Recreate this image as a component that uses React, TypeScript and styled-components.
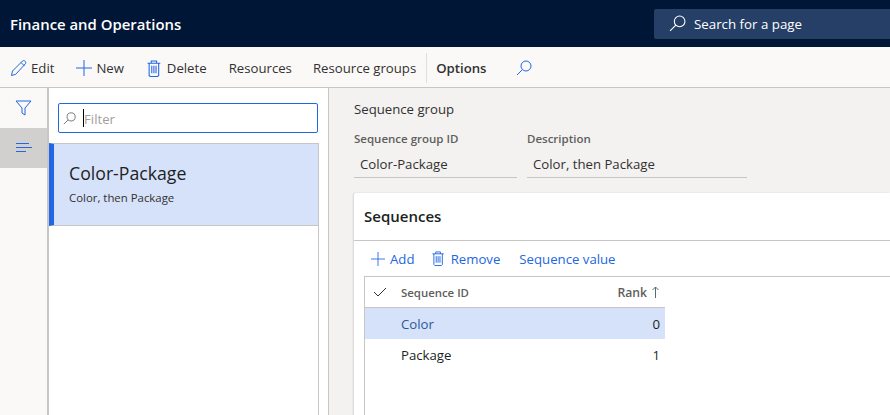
import React, { FC } from 'react';
import styled, { createGlobalStyle } from 'styled-components';

const Global = createGlobalStyle`
  html, body {
    margin: 0;
    height: 100%;
    overflow: hidden;
  }

  body {
    font-family: 'Open Sans', 'Noto Sans', 'Liberation Sans', sans-serif;
    font-size: 13.2px;
    color: #201f1e;
    background: #f3f2f1;
  }
`;

const Page = styled.div`
  display: flex;
  flex-direction: column;
  width: 890px;
  height: 415px;
  overflow: hidden;
`;

const TopBar = styled.header`
  display: flex;
  align-items: center;
  justify-content: space-between;
  flex: 0 0 47px;
  background: #001637;
  padding-left: 10px;
`;

const AppName = styled.div`
  color: #ffffff;
  font-size: 14.9px;
  font-weight: 600;
`;

const PageSearch = styled.div`
  display: flex;
  align-items: center;
  gap: 8px;
  width: 236px;
  height: 30px;
  box-sizing: border-box;
  padding-left: 15px;
  background: #263f66;
  border-radius: 2px 0 0 2px;
  color: #ffffff;
  font-size: 13.3px;
`;

const ActionBar = styled.nav`
  display: flex;
  align-items: center;
  flex: 0 0 41px;
  box-sizing: border-box;
  padding: 2px 0 0 10px;
  background: #faf9f8;
  border-bottom: 1px solid #c8c6c4;
`;

const Action = styled.div<{ $gap?: number; $space?: number; $bold?: boolean }>`
  display: flex;
  align-items: center;
  gap: ${(p) => p.$gap ?? 4}px;
  margin-right: ${(p) => p.$space ?? 22}px;
  font-weight: ${(p) => (p.$bold ? 600 : 400)};
  color: #323130;
`;

const Separator = styled.div`
  width: 1px;
  height: 30px;
  margin: 0 9px 0 -12px;
  background: #e1dfdd;
`;

const Main = styled.main`
  display: flex;
  flex: 1;
  min-height: 0;
`;

const Rail = styled.aside`
  flex: 0 0 47px;
  background: #faf9f8;
  border-right: 2px solid #c8c6c4;
`;

const RailButton = styled.div<{ $active?: boolean }>`
  display: flex;
  align-items: center;
  justify-content: center;
  height: 40px;
  background: ${(p) => (p.$active ? '#d2d0ce' : 'transparent')};
`;

const ListPane = styled.section`
  display: flex;
  flex-direction: column;
  flex: 0 0 280px;
  box-sizing: border-box;
  padding-top: 15px;
  background: #ffffff;
  border-right: 1px solid #c8c6c4;
`;

const FilterBox = styled.div`
  display: flex;
  align-items: center;
  flex: 0 0 30px;
  margin: 0 10px 0 9px;
  box-sizing: border-box;
  padding-left: 4px;
  gap: 7px;
  border: 1px solid #2266e3;
  border-radius: 2px;
  color: #a19f9d;
`;

const FilterText = styled.span`
  padding-top: 2px;
`;

const Caret = styled.span`
  width: 1px;
  height: 18px;
  margin-right: -7px;
  background: #000000;
`;

const List = styled.div`
  flex: 1;
  margin: 10px 9px 0 0;
  border-right: 1px solid #c8c6c4;
`;

const ListItem = styled.div`
  height: 83px;
  box-sizing: border-box;
  padding: 16px 0 0 15px;
  background: #d6e2f9;
  border-top: 1px solid #c8c6c4;
  border-bottom: 1px solid #c8c6c4;
  border-left: 5px solid #2266e3;
`;

const ItemTitle = styled.div`
  font-size: 17.7px;
  font-weight: 500;
  line-height: 26px;
`;

const ItemText = styled.div`
  margin-top: 2px;
  font-size: 11.4px;
  line-height: 20px;
  color: #323130;
`;

const Details = styled.section`
  display: flex;
  flex-direction: column;
  flex: 1;
  min-width: 0;
  padding: 11px 0 0 25px;
`;

const SectionTitle = styled.div`
  line-height: 20px;
  color: #323130;
`;

const Fields = styled.div`
  display: flex;
  gap: 10px;
  margin-top: 11px;
`;

const Field = styled.div<{ $width: number }>`
  width: ${(p) => p.$width}px;
`;

const FieldLabel = styled.div`
  font-size: 11.5px;
  font-weight: 600;
  line-height: 18px;
  color: #605e5c;
`;

const FieldValue = styled.div`
  height: 30px;
  box-sizing: border-box;
  padding: 4px 0 0 6px;
  line-height: 25px;
  color: #323130;
  border-bottom: 1px solid #c8c6c4;
`;

const Card = styled.div`
  flex: 1;
  margin-top: 15px;
  background: #ffffff;
  border-radius: 2px 0 0 0;
  box-shadow: -1px 0 2px rgba(0, 0, 0, 0.12);
`;

const CardTitle = styled.div`
  height: 48px;
  box-sizing: border-box;
  padding: 11px 0 0 10px;
  font-size: 15px;
  font-weight: 600;
  line-height: 24px;
  border-bottom: 1px solid #c8c6c4;
`;

const GridBar = styled.div`
  display: flex;
  align-items: center;
  height: 35px;
  padding-left: 17px;
`;

const GridAction = styled.div<{ $gap?: number; $space?: number }>`
  display: flex;
  align-items: center;
  gap: ${(p) => p.$gap ?? 0}px;
  margin-right: ${(p) => p.$space ?? 18}px;
  color: #2266e3;
`;

const Grid = styled.div`
  height: 200px;
  margin-left: 10px;
  border: 1px solid #c8c6c4;
  border-right: 0;
`;

const GridHeader = styled.div`
  display: flex;
  align-items: center;
  width: 300px;
  height: 30px;
  border-bottom: 1px solid #c8c6c4;
  font-size: 11.4px;
  font-weight: 600;
  color: #605e5c;
`;

const CheckCell = styled.div`
  display: flex;
  flex: 0 0 36px;
  box-sizing: border-box;
  padding-left: 8px;
`;

const IdCell = styled.div`
  flex: 1;
`;

const RankCell = styled.div`
  display: flex;
  justify-content: flex-end;
  align-items: center;
  gap: 5px;
  padding-right: 6px;
  font-size: 12.2px;
`;

const GridRow = styled.div<{ $selected?: boolean }>`
  display: flex;
  align-items: center;
  width: 300px;
  height: 31px;
  background: ${(p) => (p.$selected ? '#d6e2f9' : 'transparent')};
  color: ${(p) => (p.$selected ? '#2b579a' : '#201f1e')};
`;

const RowValue = styled.div`
  padding-right: 5px;
  color: #201f1e;
`;

const SearchIcon: FC<{ color: string; size?: number }> = ({ color, size = 16 }) => (
  <svg width={size} height={size} viewBox="0 0 16 16" fill="none" stroke={color} strokeWidth="1">
    <circle cx="10" cy="6" r="5" />
    <path d="M6.4 9.6L1 15" />
  </svg>
);

const PencilIcon: FC = () => (
  <svg width="17" height="17" viewBox="0 0 17 17" fill="none" stroke="#2266e3" strokeWidth="1">
    <path d="M1.5 15.5l1-4.5L12.5 1c.8-.6 1.8-.6 2.6.2.8.8.9 1.9.2 2.7L5.7 14.3z" />
    <path d="M11 2.5l3.5 3.5" />
  </svg>
);

const PlusIcon: FC<{ size: number }> = ({ size }) => (
  <svg width={size} height={size} viewBox="0 0 16 16" fill="none" stroke="#2266e3" strokeWidth="1">
    <path d="M8 0v16M0 8h16" />
  </svg>
);

const TrashIcon: FC<{ size: number }> = ({ size }) => (
  <svg width={(size * 13) / 16} height={size} viewBox="1.5 0 13 16" fill="none" stroke="#2266e3" strokeWidth="1">
    <path d="M2 3h12M5.5 3V1h5v2M3.5 3v11.5l1 1h7l1-1V3M6 5.5v7M8 5.5v7M10 5.5v7" />
  </svg>
);

const FilterIcon: FC = () => (
  <svg width="17" height="16" viewBox="0 0 17 16" fill="none" stroke="#2266e3" strokeWidth="1">
    <path d="M1 1h15l-6 7v7l-3-2V8z" />
  </svg>
);

const ListIcon: FC = () => (
  <svg width="16" height="10" viewBox="0 0 16 10" fill="none" stroke="#2266e3" strokeWidth="1">
    <path d="M0 .5h13M0 4.5h16M0 8.5h10" />
  </svg>
);

const CheckIcon: FC = () => (
  <svg width="14" height="10" viewBox="0 0 14 10" fill="none" stroke="#323130" strokeWidth="1">
    <path d="M1 5l4 4 8-8" />
  </svg>
);

const ArrowUp: FC = () => (
  <svg width="7" height="12" viewBox="0 0 7 12" fill="none" stroke="#4f6f6a" strokeWidth="1">
    <path d="M3.5 12V1M.5 4l3-3 3 3" />
  </svg>
);

const App: FC = () => (
  <Page>
    <Global />
    <TopBar>
      <AppName>Finance and Operations</AppName>
      <PageSearch>
        <SearchIcon color="#ffffff" size={17} />
        Search for a page
      </PageSearch>
    </TopBar>
    <ActionBar>
      <Action><PencilIcon />Edit</Action>
      <Action $space={23}><PlusIcon size={16} />New</Action>
      <Action $gap={6}><TrashIcon size={17} />Delete</Action>
      <Action $space={21}>Resources</Action>
      <Action>Resource groups</Action>
      <Separator />
      <Action $bold $space={29}>Options</Action>
      <SearchIcon color="#2266e3" />
    </ActionBar>
    <Main>
      <Rail>
        <RailButton><FilterIcon /></RailButton>
        <RailButton $active><ListIcon /></RailButton>
      </Rail>
      <ListPane>
        <FilterBox>
          <SearchIcon color="#605e5c" size={13} />
          <Caret />
          <FilterText>Filter</FilterText>
        </FilterBox>
        <List>
          <ListItem>
            <ItemTitle>Color-Package</ItemTitle>
            <ItemText>Color, then Package</ItemText>
          </ListItem>
        </List>
      </ListPane>
      <Details>
        <SectionTitle>Sequence group</SectionTitle>
        <Fields>
          <Field $width={163}>
            <FieldLabel>Sequence group ID</FieldLabel>
            <FieldValue>Color-Package</FieldValue>
          </Field>
          <Field $width={220}>
            <FieldLabel>Description</FieldLabel>
            <FieldValue>Color, then Package</FieldValue>
          </Field>
        </Fields>
        <Card>
          <CardTitle>Sequences</CardTitle>
          <GridBar>
            <GridAction $gap={5}><PlusIcon size={14} />Add</GridAction>
            <GridAction $gap={6} $space={19}><TrashIcon size={15} />Remove</GridAction>
            <GridAction>Sequence value</GridAction>
          </GridBar>
          <Grid>
            <GridHeader>
              <CheckCell><CheckIcon /></CheckCell>
              <IdCell>Sequence ID</IdCell>
              <RankCell>Rank <ArrowUp /></RankCell>
            </GridHeader>
            <GridRow $selected>
              <CheckCell />
              <IdCell>Color</IdCell>
              <RowValue>0</RowValue>
            </GridRow>
            <GridRow>
              <CheckCell />
              <IdCell>Package</IdCell>
              <RowValue>1</RowValue>
            </GridRow>
          </Grid>
        </Card>
      </Details>
    </Main>
  </Page>
);

export default App;
